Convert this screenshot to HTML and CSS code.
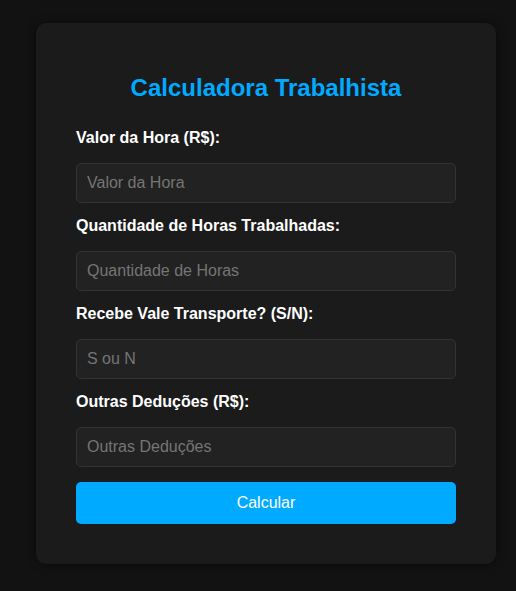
FILE: index.html
```
<!DOCTYPE html>
<html lang="pt-BR">
<head>
<meta charset="utf-8">
<title>Calculadora Trabalhista</title>
<link rel="stylesheet" href="styles.css">
</head>
<body>
<div class="page">
  <div class="card">
    <h2 class="title">Calculadora Trabalhista</h2>
    <form class="form">
      <label class="label" for="valor">Valor da Hora (R$):</label>
      <input class="input" id="valor" type="text" placeholder="Valor da Hora">
      <label class="label" for="horas">Quantidade de Horas Trabalhadas:</label>
      <input class="input" id="horas" type="text" placeholder="Quantidade de Horas">
      <label class="label" for="vt">Recebe Vale Transporte? (S/N):</label>
      <input class="input" id="vt" type="text" placeholder="S ou N">
      <label class="label" for="outras">Outras Deduções (R$):</label>
      <input class="input" id="outras" type="text" placeholder="Outras Deduções">
      <button class="button" type="button">Calcular</button>
    </form>
  </div>
</div>
</body>
</html>
```
FILE: styles.css
```
html, body {
  margin: 0;
  padding: 0;
  background: #121212;
  font-family: "Liberation Sans", Arial, sans-serif;
  color: #fff;
}
.page {
  padding: 23px 20px 28px 36px;
}
.card {
  width: 380px;
  background: #1b1b1b;
  border-radius: 10px;
  padding: 51px 40px 40px 40px;
  box-shadow: 0 0 10px rgba(0, 0, 0, 0.5);
}
.title {
  margin: 0 0 27px 0;
  text-align: center;
  color: #00aaff;
  font-size: 24px;
  font-weight: bold;
  line-height: 28px;
}
.form {
  display: flex;
  flex-direction: column;
}
.label {
  display: block;
  font-size: 16px;
  font-weight: bold;
  line-height: 18px;
  margin-bottom: 16px;
  color: #fff;
}
.input {
  box-sizing: border-box;
  height: 40px;
  width: 100%;
  padding: 10px;
  margin: 0 0 14px 0;
  background: #222;
  border: 1px solid #333;
  border-radius: 5px;
  color: #fff;
  font-family: "Liberation Sans", Arial, sans-serif;
  font-size: 16px;
}
.input::placeholder {
  color: #757575;
}
.button {
  margin-top: 1px;
  height: 42px;
  width: 100%;
  border: none;
  border-radius: 5px;
  background: #00aaff;
  color: #fff;
  font-family: "Liberation Sans", Arial, sans-serif;
  font-size: 16px;
}
```
